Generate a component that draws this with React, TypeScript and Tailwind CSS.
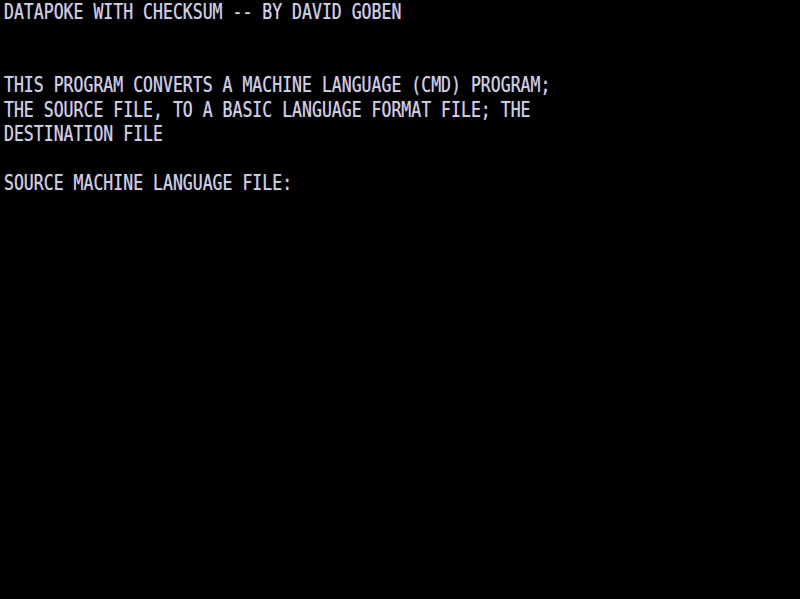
import React from 'react';

const lines = [
  'DATAPOKE WITH CHECKSUM -- BY DAVID GOBEN',
  '',
  '',
  'THIS PROGRAM CONVERTS A MACHINE LANGUAGE (CMD) PROGRAM;',
  'THE SOURCE FILE, TO A BASIC LANGUAGE FORMAT FILE; THE',
  'DESTINATION FILE',
  '',
  'SOURCE MACHINE LANGUAGE FILE:',
];

const App: React.FC = () => {
  return (
    <div className="w-[800px] h-[599px] bg-black overflow-hidden pl-[4px]">
      {/* condensed terminal text, ~10px per column */}
      <div
        className="origin-top-left scale-x-[0.75] text-[22px] leading-[24.4px] text-[#cfcfe6] whitespace-pre"
        style={{ fontFamily: '"DejaVu Sans Mono", monospace', textShadow: '0 0 1px rgba(207,207,230,0.6)' }}
      >
        {lines.map((line, i) => (
          <div key={i} className="h-[24.4px]">{line}</div>
        ))}
      </div>
    </div>
  );
};

export default App;
